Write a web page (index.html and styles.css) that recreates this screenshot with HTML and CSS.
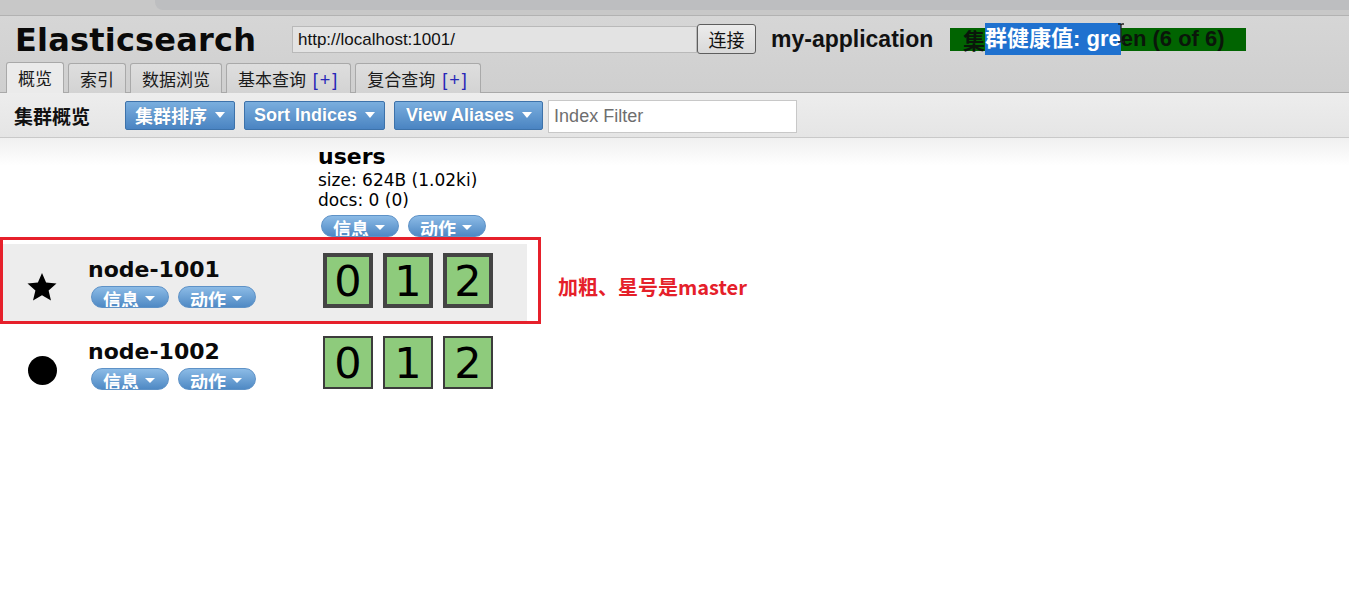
FILE: index.html
```html
<!DOCTYPE html>
<html lang="zh">
<head>
<meta charset="utf-8">
<title>Elasticsearch head</title>
<link rel="stylesheet" href="styles.css">
</head>
<body>
<div class="topstrip"><div class="browser-tab"></div></div>
<header class="header">
  <div class="titlebar">
    <h1 class="logo">Elasticsearch</h1>
    <div class="connect-group">
      <input class="url" type="text" value="http://localhost:1001/">
      <button class="connect">连接</button>
    </div>
    <span class="cluster-name">my-application</span>
    <span class="health">集<span class="sel">群健康值: gre</span>en (6 of 6)</span>
    <svg class="ibeam" width="8" height="20" viewBox="0 0 8 20"><path d="M1 1h2l1 1 1-1h2M4 2v16M1 19h2l1-1 1 1h2" fill="none" stroke="#222" stroke-width="1.3"/></svg>
  </div>
  <nav class="tabs">
    <span class="tab active">概览</span>
    <span class="tab">索引</span>
    <span class="tab">数据浏览</span>
    <span class="tab">基本查询 <span class="plus">[+]</span></span>
    <span class="tab">复合查询 <span class="plus">[+]</span></span>
  </nav>
</header>
<div class="toolbar">
  <span class="toolbar-title">集群概览</span>
  <button class="btn">集群排序<i class="caret"></i></button>
  <button class="btn">Sort Indices<i class="caret"></i></button>
  <button class="btn btn-last">View Aliases<i class="caret"></i></button>
  <input class="filter" type="text" placeholder="Index Filter">
</div>
<main class="content">
  <div class="cluster">
    <div class="row head-row">
      <div class="node-cell"></div>
      <div class="index-cell">
        <div class="index-name">users</div>
        <div class="index-meta">size: 624B (1.02ki)</div>
        <div class="index-meta">docs: 0 (0)</div>
        <div class="pills">
          <span class="pill">信息<i class="caret small"></i></span>
          <span class="pill">动作<i class="caret small"></i></span>
        </div>
      </div>
    </div>
    <div class="row node-row master">
      <div class="node-cell">
        <div class="node-icon">
          <svg width="32" height="31" viewBox="0 0 32 31"><path d="M16 1l4.1 9.6 10.4.9-7.9 6.9 2.4 10.2L16 23.2l-9 5.4 2.4-10.2L1.5 11.5l10.4-.9z" fill="#000"/></svg>
        </div>
        <div class="node-info">
          <div class="node-name">node-1001</div>
          <div class="pills">
            <span class="pill">信息<i class="caret small"></i></span>
            <span class="pill">动作<i class="caret small"></i></span>
          </div>
        </div>
      </div>
      <div class="shards">
        <span class="shard primary">0</span>
        <span class="shard primary">1</span>
        <span class="shard primary">2</span>
      </div>
    </div>
    <div class="row node-row">
      <div class="node-cell">
        <div class="node-icon"><span class="dot"></span></div>
        <div class="node-info">
          <div class="node-name">node-1002</div>
          <div class="pills">
            <span class="pill">信息<i class="caret small"></i></span>
            <span class="pill">动作<i class="caret small"></i></span>
          </div>
        </div>
      </div>
      <div class="shards">
        <span class="shard replica">0</span>
        <span class="shard replica">1</span>
        <span class="shard replica">2</span>
      </div>
    </div>
    <div class="annotation-box"></div>
    <div class="annotation-text">加粗、星号是master</div>
  </div>
</main>
</body>
</html>
```
FILE: styles.css
```css
* { box-sizing: border-box; }
html, body { margin: 0; padding: 0; background: #fff; }
body {
  font-family: "Liberation Sans", "Noto Sans CJK SC", sans-serif;
  color: #000;
  width: 1349px;
  height: 608px;
  overflow: hidden;
}

.topstrip {
  height: 16px;
  background: #c8c8c8;
  border-bottom: 1px solid #b2b2b2;
  padding-left: 155px;
}
.browser-tab {
  height: 10px;
  background: #bdbec0;
  border-bottom-left-radius: 8px;
}

.header {
  background: linear-gradient(#d6d6d6, #cfcfcf);
  border-bottom: 1px solid #a9a9a9;
}
.titlebar {
  position: relative;
  height: 46px;
  display: flex;
  align-items: center;
  padding-left: 15px;
}
.logo {
  margin: 0;
  font-family: "DejaVu Sans", sans-serif;
  font-weight: bold;
  font-size: 32px;
  letter-spacing: 0.2px;
  color: #0a0a0a;
  width: 277px;
  padding-top: 2px;
}
.connect-group { display: flex; align-items: center; }
.url {
  width: 405px;
  height: 27px;
  border: 1px solid #b9b9b9;
  background: #e3e3e3;
  font-family: "Liberation Sans", sans-serif;
  font-size: 17px;
  padding: 2px 5px 0;
  color: #111;
  margin: 0;
}
.connect {
  width: 59px;
  height: 30px;
  margin: 0;
  border: 1px solid #5e5e5e;
  border-radius: 3px;
  background: linear-gradient(#ececec, #d9d9d9);
  font-family: "Noto Sans CJK SC", sans-serif;
  font-size: 18px;
  padding: 0;
  color: #111;
}
.cluster-name {
  margin-left: 15px;
  font-weight: bold;
  font-size: 23px;
  color: #111;
  width: 179px;
}
.health {
  display: inline-flex;
  align-items: center;
  height: 23px;
  width: 296px;
  padding-left: 13px;
  background: #016401;
  color: #0a160a;
  font-weight: bold;
  font-size: 22px;
  white-space: nowrap;
  font-family: "Liberation Sans", "Noto Sans CJK SC", sans-serif;
}
.health .sel {
  display: inline-block;
  height: 32px;
  line-height: 32px;
  background: #1f71cf;
  color: #fff;
}
.ibeam {
  position: absolute;
  left: 1117px;
  top: 7px;
}

.tabs {
  height: 30px;
  display: flex;
  align-items: flex-end;
  gap: 4px;
  padding-left: 6px;
}
.tab {
  height: 30px;
  padding: 3px 11px 0;
  border: 1px solid #a9a9a9;
  border-bottom: none;
  border-radius: 3px 3px 0 0;
  background: linear-gradient(#dedede, #d3d3d3);
  font-size: 17px;
  line-height: 24px;
  color: #1a1a1a;
  margin-bottom: -1px;
  font-family: "Noto Sans CJK SC", sans-serif;
}
.tab.active {
  background: #ebebeb;
  height: 31px;
  position: relative;
}
.plus {
  color: #2727b8;
  font-family: "Liberation Sans", sans-serif;
  font-size: 18px;
  letter-spacing: 2px;
  margin-left: 3px;
}

.toolbar {
  height: 45px;
  background: linear-gradient(#ededed, #e5e5e5);
  border-bottom: 1px solid #c9c9c9;
  display: flex;
  align-items: center;
  padding-left: 14px;
}
.toolbar-title {
  font-family: "Noto Sans CJK SC", sans-serif;
  font-weight: bold;
  font-size: 19px;
  color: #111;
  width: 111px;
}
.btn {
  height: 29px;
  margin: 0 9px 0 0;
  padding: 0 9px;
  border: 1px solid #3d72aa;
  border-radius: 2px;
  background: linear-gradient(#7aaede, #4a84c2);
  color: #fff;
  font-family: "Liberation Sans", "Noto Sans CJK SC", sans-serif;
  font-weight: bold;
  font-size: 18px;
  display: inline-flex;
  align-items: center;
  gap: 8px;
  text-shadow: 0 0 1px rgba(0,0,0,0.2);
}
.btn.btn-last { margin-right: 5px; padding: 0 10px 0 11px; }
.caret {
  display: inline-block;
  width: 0;
  height: 0;
  border-left: 5px solid transparent;
  border-right: 5px solid transparent;
  border-top: 6px solid #fff;
}
.caret.small {
  border-left-width: 5px;
  border-right-width: 5px;
  border-top-width: 5px;
}
.filter {
  width: 249px;
  height: 33px;
  margin: 2px 0 0;
  border: 1px solid #c8c8c8;
  background: #fff;
  font-family: "Liberation Sans", sans-serif;
  font-size: 18px;
  padding: 0 5px;
}
.filter::placeholder { color: #6e6e6e; }

.content {
  background: linear-gradient(#f0f0f0, #fff 28px);
  height: 470px;
}
.cluster {
  position: relative;
  width: 527px;
}
.row { display: flex; }
.node-cell { width: 318px; display: flex; }
.head-row { padding-top: 6px; height: 106px; }
.index-cell { width: 209px; }
.index-name {
  font-family: "DejaVu Sans", sans-serif;
  font-weight: bold;
  font-size: 22px;
  line-height: 26px;
}
.index-meta {
  font-family: "DejaVu Sans", sans-serif;
  font-size: 17px;
  line-height: 20px;
}
.index-cell .pills { margin: 5px 0 0 3px; }
.pills { display: flex; gap: 9px; }
.pill {
  display: inline-flex;
  align-items: flex-start;
  gap: 6px;
  height: 22px;
  overflow: hidden;
  padding: 0 0 0 11px;
  width: 78px;
  border: 1px solid #5e92c7;
  border-radius: 11px;
  background: linear-gradient(#8cbbe6, #4f89c4);
  color: #fff;
  font-family: "Noto Sans CJK SC", sans-serif;
  font-weight: bold;
  font-size: 18px;
  line-height: 25px;
}
.pill .caret { margin-top: 9px; }

.node-row { height: 81px; }
.node-row.master { background: #ededed; height: 78px; margin-bottom: 4px; }
.node-icon {
  width: 84px;
  display: flex;
  align-items: center;
  justify-content: center;
  padding-top: 8px;
}
.dot {
  width: 29px;
  height: 29px;
  border-radius: 50%;
  background: #000;
}
.node-info { padding-top: 12px; padding-left: 4px; }
.node-name {
  font-family: "DejaVu Sans", sans-serif;
  font-weight: bold;
  font-size: 22px;
  line-height: 27px;
  color: #0a0a0a;
}
.node-info .pills { margin-top: 3px; margin-left: 3px; }

.shards {
  display: flex;
  gap: 10px;
  padding-left: 5px;
  padding-top: 9px;
}
.node-row:not(.master) .shards { padding-top: 10px; }
.shard {
  width: 50px;
  height: 55px;
  display: flex;
  align-items: center;
  justify-content: center;
  background: #8ecb7c;
  font-family: "DejaVu Sans", sans-serif;
  font-size: 43px;
  color: #000;
}
.shard.primary { border: 4px solid #444; }
.shard.replica { border: 2px solid #3c3c3c; height: 53px; }

.annotation-box {
  position: absolute;
  left: 0;
  top: 99px;
  width: 541px;
  height: 87px;
  border: 3px solid #e6202b;
}
.annotation-text {
  position: absolute;
  left: 558px;
  top: 134px;
  font-family: "Noto Sans CJK SC", sans-serif;
  font-weight: bold;
  font-size: 20px;
  color: #e5202a;
  text-shadow: 0 0 2px #fff, 0 0 3px #fff;
  white-space: nowrap;
}
```
